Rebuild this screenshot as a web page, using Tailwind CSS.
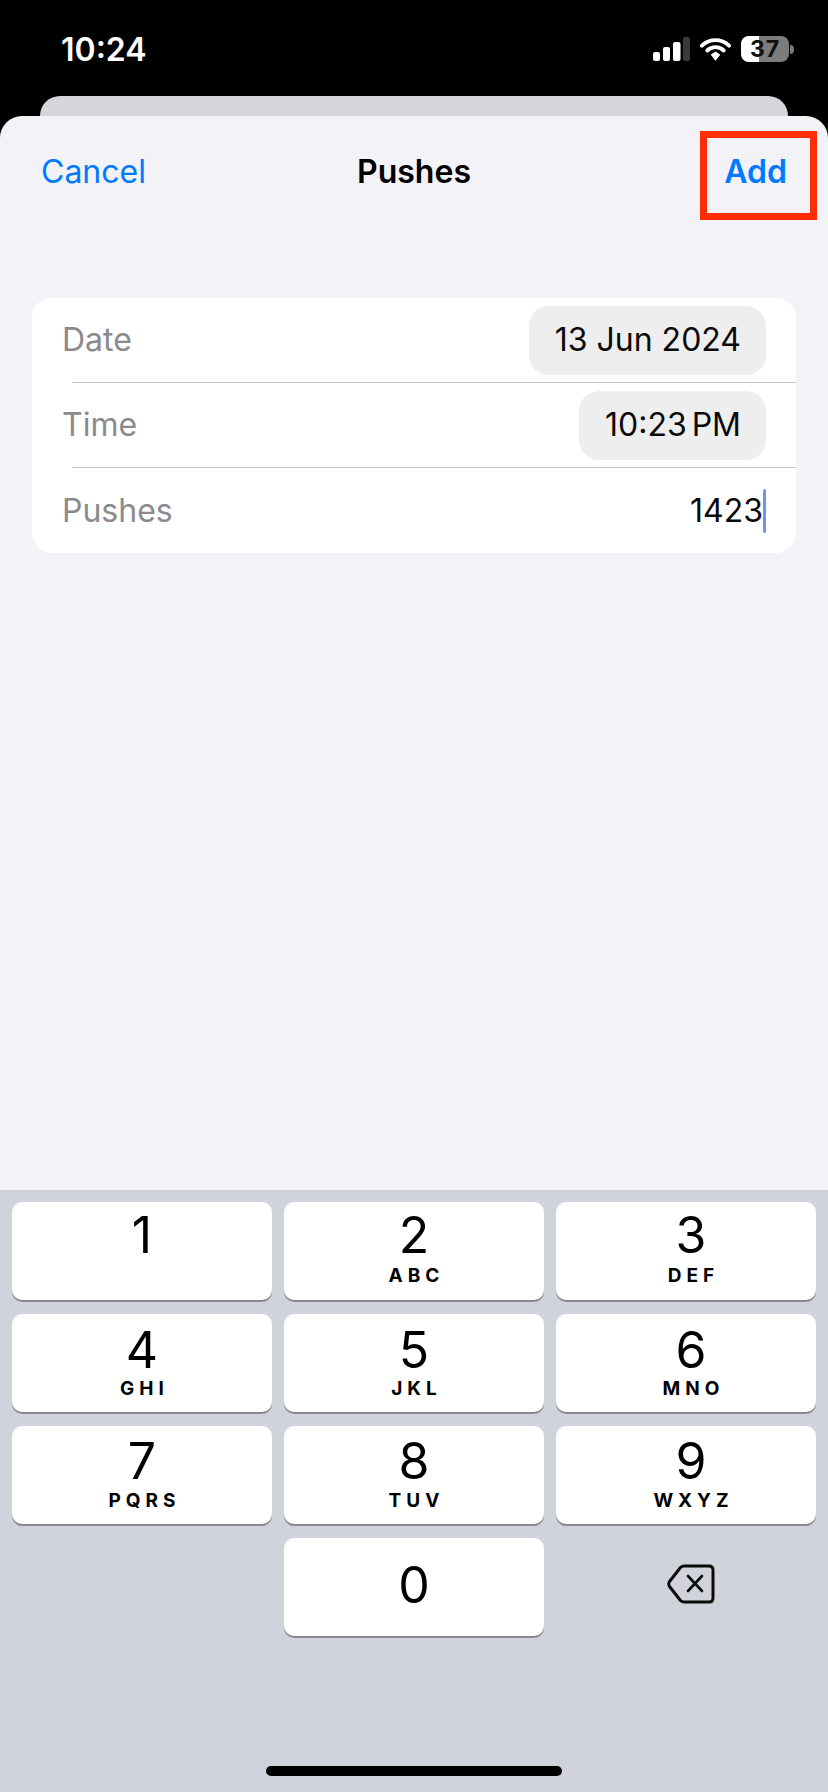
<!DOCTYPE html>
<html lang="en">
<head>
    <meta charset="UTF-8">
    <meta name="viewport" content="width=device-width, initial-scale=1.0">
    <title>Pushes</title>
    <script src="https://cdn.jsdelivr.net/npm/@tailwindcss/browser@4"></script>
</head>
<body class="bg-black font-['Inter',sans-serif] text-black">
<div class="relative flex h-[1792px] w-[828px] flex-col overflow-hidden bg-black">
    <!-- Status bar -->
    <div class="flex h-[96px] shrink-0 items-start justify-between pl-[61px] pr-[34px] pt-[30px] text-white">
        <span class="mt-[1px] text-[32px] leading-[38px] font-semibold">10:24</span>
        <div class="flex items-center gap-[10px] pt-[6px]">
            <svg width="37" height="24" viewBox="0 0 37 24">
                <rect x="0" y="15" width="7" height="9" rx="2" fill="#fff"/>
                <rect x="10" y="10" width="7" height="14" rx="2" fill="#fff"/>
                <rect x="20" y="5" width="7.500" height="19" rx="2" fill="#fff"/>
                <rect x="30" y="0" width="7" height="24" rx="2" fill="#3a3a3a"/>
            </svg>
            <svg width="31" height="24" viewBox="0 0 32 24">
                <path d="M2 8.500C10 1 22 1 30 8.500" fill="none" stroke="#fff" stroke-width="4" stroke-linecap="round"/>
                <path d="M7.500 13.500C12.500 9 19.500 9 24.500 13.500" fill="none" stroke="#fff" stroke-width="4" stroke-linecap="round"/>
                <path d="M11 18L16 14.500L21 18L16 24Z" fill="#fff"/>
            </svg>
            <div class="flex items-center gap-[1px]">
                <div class="relative flex h-[26px] w-[48px] items-center justify-center overflow-hidden rounded-[8px] bg-[#7c7c7c]">
                    <div class="absolute inset-y-0 left-0 w-[18px] bg-white"></div>
                    <span class="relative text-[23px] leading-none font-bold tracking-[1px] text-[#111]">37</span>
                </div>
                <div class="h-[9px] w-[4px] rounded-r-full bg-[#7c7c7c]"></div>
            </div>
        </div>
    </div>

    <!-- Card behind the sheet -->
    <div class="mx-[40px] h-[20px] shrink-0 rounded-t-[20px] bg-[#d5d5da]"></div>

    <!-- Sheet -->
    <div class="flex flex-1 flex-col rounded-t-[22px] bg-[#f2f2f7]">
        <div class="grid grid-cols-[1fr_auto_1fr] items-center px-[41px] pt-[36px] text-[32px] leading-[40px]">
            <span class="text-[#007aff]">Cancel</span>
            <span class="font-semibold">Pushes</span>
            <span class="text-right font-semibold text-[#007aff]">Add</span>
        </div>

        <!-- Form -->
        <div class="mx-[32px] mt-[106px] flex flex-col rounded-[20px] bg-white text-[32px] leading-[40px]">
            <div class="flex h-[84px] items-center justify-between pl-[30px] pr-[30px]">
                <span class="text-[#8a8a8e]">Date</span>
                <span class="flex h-[69px] w-[237px] items-center justify-end rounded-[20px] bg-[#eeeeef] pr-[25px] text-[#0a0a0a]">13 Jun 2024</span>
            </div>
            <div class="ml-[40px] h-[1px] bg-[#c6c6c8]"></div>
            <div class="flex h-[84px] items-center justify-between pl-[30px] pr-[30px]">
                <span class="text-[#8a8a8e]">Time</span>
                <span class="flex h-[69px] w-[187px] items-center justify-end rounded-[20px] bg-[#eeeeef] pr-[25px] text-[#0a0a0a] [word-spacing:-4px]">10:23 PM</span>
            </div>
            <div class="ml-[40px] h-[1px] bg-[#c6c6c8]"></div>
            <div class="flex h-[85px] items-center justify-between pl-[30px] pr-[30px]">
                <span class="text-[#8a8a8e]">Pushes</span>
                <div class="flex items-center">
                    <span class="text-[#0a0a0a]">1423</span>
                    <span class="h-[44px] w-[3px] rounded-full bg-[#7390f5]"></span>
                </div>
            </div>
        </div>

        <!-- Keyboard -->
        <div class="mt-auto h-[602px] bg-[#d0d3db] px-[12px] pt-[12px]">
            <div class="grid grid-cols-3 gap-x-[12px] gap-y-[14px]">
                <div class="flex h-[98px] flex-col items-center rounded-[10px] bg-white pt-[8px] shadow-[0_2px_0_#898a8d]">
                    <span class="text-[50px] leading-[50px]">1</span>
                </div>
                <div class="flex h-[98px] flex-col items-center rounded-[10px] bg-white pt-[8px] shadow-[0_2px_0_#898a8d]">
                    <span class="text-[50px] leading-[50px]">2</span>
                    <span class="-mr-[5px] mt-[7px] text-[19px] leading-[18px] font-bold tracking-[5px]">ABC</span>
                </div>
                <div class="flex h-[98px] flex-col items-center rounded-[10px] bg-white pl-[10px] pt-[8px] shadow-[0_2px_0_#898a8d]">
                    <span class="text-[50px] leading-[50px]">3</span>
                    <span class="-mr-[5px] mt-[7px] text-[19px] leading-[18px] font-bold tracking-[5px]">DEF</span>
                </div>
                <div class="flex h-[98px] flex-col items-center rounded-[10px] bg-white pt-[11px] shadow-[0_2px_0_#898a8d]">
                    <span class="text-[50px] leading-[50px]">4</span>
                    <span class="-mr-[5px] mt-[5px] text-[19px] leading-[18px] font-bold tracking-[5px]">GHI</span>
                </div>
                <div class="flex h-[98px] flex-col items-center rounded-[10px] bg-white pt-[11px] shadow-[0_2px_0_#898a8d]">
                    <span class="text-[50px] leading-[50px]">5</span>
                    <span class="-mr-[5px] mt-[5px] text-[19px] leading-[18px] font-bold tracking-[5px]">JKL</span>
                </div>
                <div class="flex h-[98px] flex-col items-center rounded-[10px] bg-white pl-[10px] pt-[11px] shadow-[0_2px_0_#898a8d]">
                    <span class="text-[50px] leading-[50px]">6</span>
                    <span class="-mr-[5px] mt-[5px] text-[19px] leading-[18px] font-bold tracking-[5px]">MNO</span>
                </div>
                <div class="flex h-[98px] flex-col items-center rounded-[10px] bg-white pt-[10px] shadow-[0_2px_0_#898a8d]">
                    <span class="text-[50px] leading-[50px]">7</span>
                    <span class="-mr-[5px] mt-[6px] text-[19px] leading-[18px] font-bold tracking-[5px]">PQRS</span>
                </div>
                <div class="flex h-[98px] flex-col items-center rounded-[10px] bg-white pt-[10px] shadow-[0_2px_0_#898a8d]">
                    <span class="text-[50px] leading-[50px]">8</span>
                    <span class="-mr-[5px] mt-[6px] text-[19px] leading-[18px] font-bold tracking-[5px]">TUV</span>
                </div>
                <div class="flex h-[98px] flex-col items-center rounded-[10px] bg-white pl-[10px] pt-[10px] shadow-[0_2px_0_#898a8d]">
                    <span class="text-[50px] leading-[50px]">9</span>
                    <span class="-mr-[5px] mt-[6px] text-[19px] leading-[18px] font-bold tracking-[5px]">WXYZ</span>
                </div>
                <div class="h-[98px]"></div>
                <div class="flex h-[98px] items-center justify-center rounded-[10px] bg-white pb-[4px] shadow-[0_2px_0_#898a8d]">
                    <span class="text-[50px] leading-[50px]">0</span>
                </div>
                <div class="flex h-[98px] items-start justify-center pl-[10px] pt-[26px]">
                    <svg width="48" height="40" viewBox="0 0 48 40" fill="none" stroke="#0a0a0a" stroke-linejoin="round" stroke-linecap="round">
                        <path d="M17 2H42Q46 2 46 6V34Q46 38 42 38H17Q15 38 13.500 36.500L2.500 22.500Q1 20 2.500 17.500L13.500 3.500Q15 2 17 2Z" stroke-width="3"/>
                        <path d="M21 12L35 27M35 12L21 27" stroke-width="2.600"/>
                    </svg>
                </div>
            </div>
        </div>
    </div>

    <!-- Home indicator -->
    <div class="absolute bottom-[16px] left-[266px] h-[10px] w-[296px] rounded-full bg-black"></div>

    <!-- Annotation box round Add -->
    <div class="absolute left-[700px] top-[131px] h-[89px] w-[117px] border-[7px] border-[#ff2d00]"></div>
</div>
</body>
</html>
